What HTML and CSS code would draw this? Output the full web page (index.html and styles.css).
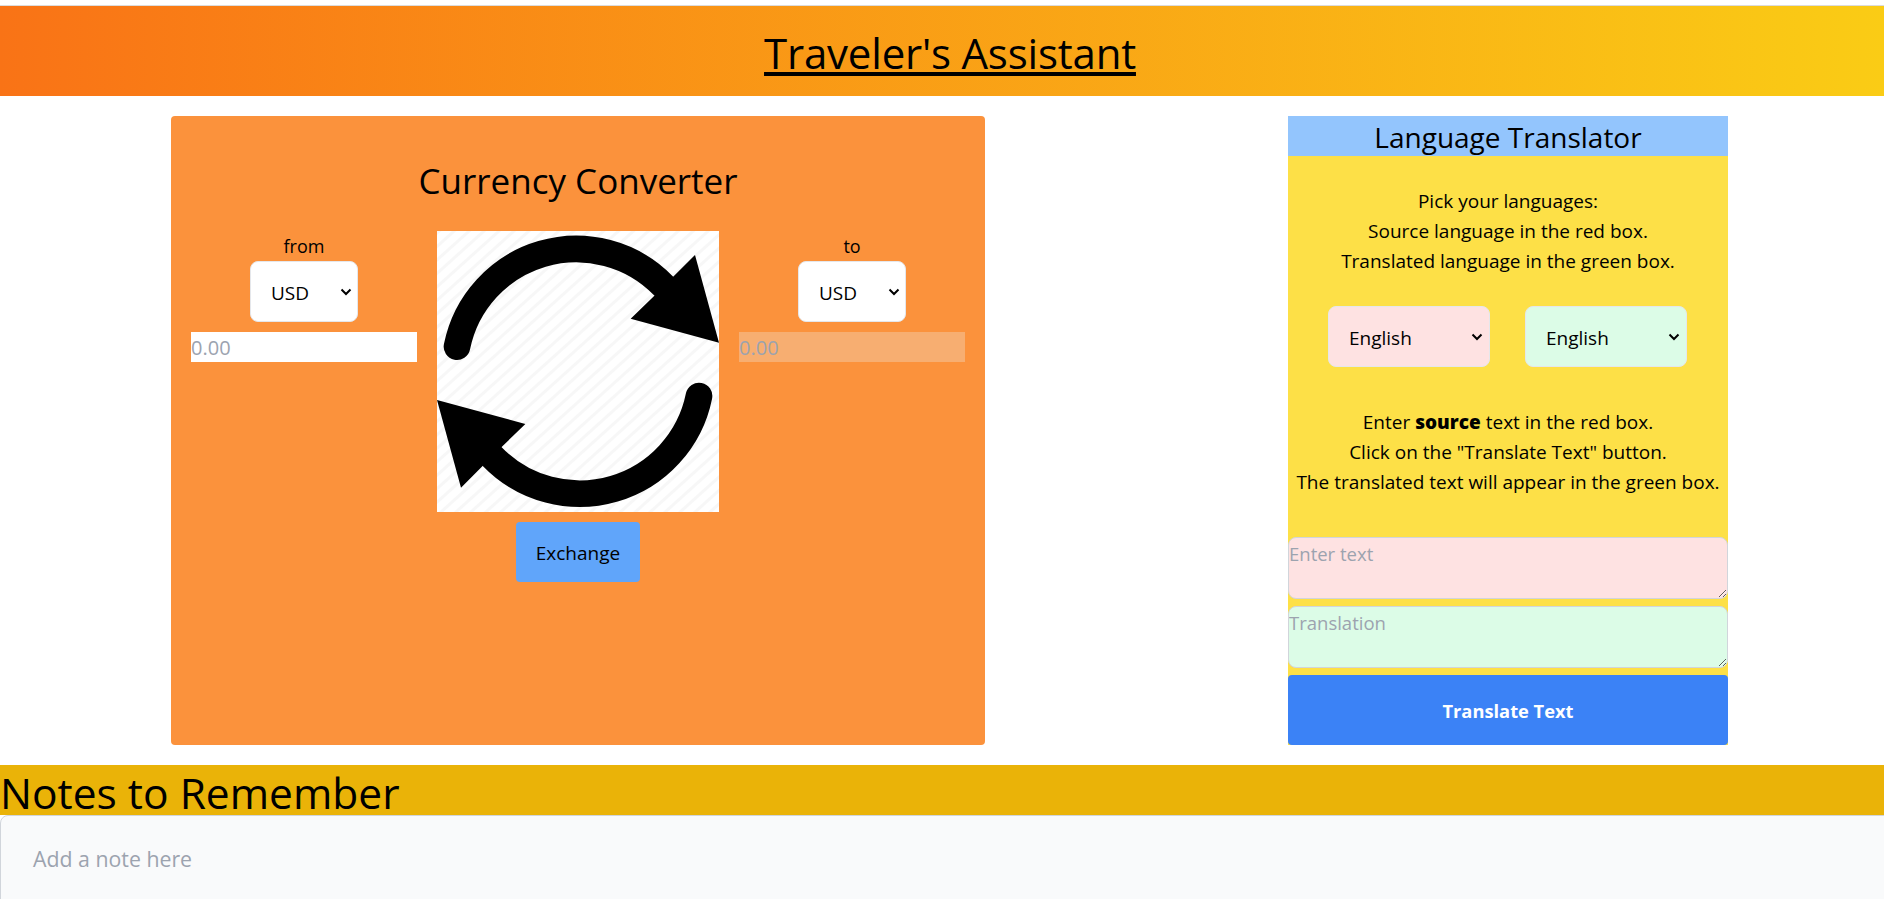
FILE: index.html
```html
<!DOCTYPE html>
<html lang="en">
<head>
  <meta charset="UTF-8" />
  <meta name="viewport" content="width=device-width,initial-scale=1" />
  <title>Traveler's Assistant</title>
  <link rel="stylesheet" href="styles.css">
</head>
<body>
  <header class="site-header">
    <h1>Traveler's Assistant</h1>
  </header>

  <main class="tools">
    <section class="converter">
      <h2>Currency Converter</h2>
      <div class="converter-row">
        <div class="currency">
          <label for="fromCur">from</label>
          <select id="fromCur"><option>USD</option></select>
          <input type="text" placeholder="0.00" />
        </div>
        <div class="exchange">
          <svg class="exchange-icon" viewBox="0 0 846 843" role="img" aria-label="exchange">
            <defs>
              <pattern id="hatch" width="30" height="30" patternUnits="userSpaceOnUse" patternTransform="rotate(-42)">
                <rect width="30" height="30" fill="#ffffff" />
                <rect width="30" height="9" fill="#f7f7f7" />
              </pattern>
            </defs>
            <rect width="846" height="843" fill="url(#hatch)" />
            <g id="arrow">
              <path d="M60 347A365 365 0 0 1 680 165" fill="none" stroke="#000" stroke-width="80" stroke-linecap="round" />
              <polygon points="774,72 846,335 581,263 649,197 707,139" />
            </g>
            <use href="#arrow" transform="rotate(180 423 421)" />
          </svg>
          <button class="exchange-btn" type="button">Exchange</button>
        </div>
        <div class="currency">
          <label for="toCur">to</label>
          <select id="toCur"><option>USD</option></select>
          <input class="result" type="text" placeholder="0.00" disabled />
        </div>
      </div>
    </section>

    <section class="translator">
      <h2>Language Translator</h2>
      <p class="help help-top">Pick your languages:<br>Source language in the red box.<br>Translated language in the green box.</p>
      <div class="lang-row">
        <select class="red"><option>English</option></select>
        <select class="green"><option>English</option></select>
      </div>
      <p class="help help-mid">Enter <b>source</b> text in the red box.<br>Click on the "Translate Text" button.<br>The translated text will appear in the green box.</p>
      <textarea class="red" placeholder="Enter text"></textarea>
      <textarea class="green" placeholder="Translation"></textarea>
      <button class="translate-btn" type="button">Translate Text</button>
    </section>
  </main>

  <section class="notes">
    <h2>Notes to Remember</h2>
    <textarea placeholder="Add a note here"></textarea>
  </section>
</body>
</html>
```

FILE: styles.css
```css
body {
  font-family: "Open Sans", "Noto Sans", sans-serif;
  margin: 0;
  padding-top: 5px;
  background: white;
  color: black;
  height: 100vh;
  box-sizing: border-box;
  overflow: hidden;
}
h1, h2, p {
  margin: 0;
  font-weight: normal;
}
select, input, textarea, button {
  font-family: inherit;
  box-sizing: border-box;
  color: black;
}
select {
  appearance: none;
  background-image: url("data:image/svg+xml,%3Csvg xmlns='http://www.w3.org/2000/svg' width='12' height='8' viewBox='0 0 12 8'%3E%3Cpath d='M1.5 1.5 6 6l4.5-4.5' fill='none' stroke='%23000' stroke-width='2'/%3E%3C/svg%3E");
  background-repeat: no-repeat;
  background-position: right 5px center;
}
input::placeholder, textarea::placeholder {
  color: #9ca3af;
  opacity: 1;
}

.site-header {
  height: 91px;
  box-sizing: border-box;
  display: flex;
  align-items: center;
  justify-content: center;
  padding: 3px 0 0 16px;
  border-top: 1px solid #dcdcdc;
  background: linear-gradient(to right, #f97316, #facc15);
}
.site-header h1 {
  font-size: 42px;
  letter-spacing: -0.2px;
  text-decoration: underline;
}

.tools {
  display: flex;
  justify-content: space-between;
  padding: 20px 156px 20px 171px;
}

.converter {
  width: 814px;
  height: 629px;
  box-sizing: border-box;
  background: #fb923c;
  border-radius: 4px;
  padding: 38px 20px 0;
}
.converter h2 {
  font-size: 35px;
  line-height: 54px;
  text-align: center;
}
.converter-row {
  display: flex;
  justify-content: space-between;
  margin-top: 23px;
}
.currency {
  width: 226px;
  display: flex;
  flex-direction: column;
  align-items: center;
}
.currency label {
  font-size: 18px;
  line-height: 30px;
}
.currency select {
  width: 108px;
  height: 61px;
  padding: 2px 0 0 20px;
  font-size: 19px;
  background-color: white;
  border: 1px solid #e5e7eb;
  border-radius: 8px;
}
.currency input {
  width: 226px;
  height: 30px;
  margin-top: 10px;
  padding: 0;
  border: none;
  font-size: 20px;
  background: white;
}
.currency input.result {
  background: rgba(239, 239, 239, 0.3);
}
.exchange {
  width: 282px;
  display: flex;
  flex-direction: column;
  align-items: center;
}
.exchange-icon {
  display: block;
  width: 282px;
  height: 281px;
}
.exchange-btn {
  width: 124px;
  height: 60px;
  margin-top: 10px;
  padding-top: 2px;
  background: #60a5fa;
  border: none;
  border-radius: 4px;
  font-size: 19px;
}

.translator {
  width: 440px;
  height: 629px;
  display: flex;
  flex-direction: column;
  background: #fde047;
}
.translator h2 {
  height: 40px;
  font-size: 28px;
  line-height: 42px;
  text-align: center;
  background: #93c5fd;
}
.help {
  font-size: 19px;
  line-height: 30px;
  text-align: center;
}
.help b {
  font-weight: 900;
}
.help-top {
  margin-top: 30px;
}
.lang-row {
  display: flex;
  gap: 35px;
  margin: 30px 0 40px;
  padding-left: 40px;
}
.lang-row select {
  width: 162px;
  height: 61px;
  padding: 2px 0 0 20px;
  font-size: 19px;
  border: 1px solid #e5e7eb;
  border-radius: 8px;
  background-position: right 6px center;
}
.translator textarea {
  display: block;
  width: 100%;
  height: 62px;
  padding: 3px 0 0;
  margin-bottom: 7px;
  font-size: 18.5px;
  border: 1px solid #d1d5db;
  border-radius: 8px;
}
.help-mid {
  margin-bottom: 40px;
}
.red {
  background-color: #fee2e2;
}
.green {
  background-color: #dcfce7;
}
.translate-btn {
  height: 70px;
  margin-top: auto;
  background: #3b82f6;
  color: white;
  border: none;
  border-radius: 4px;
  font-size: 18.3px;
  font-weight: bold;
}

.notes h2 {
  height: 50px;
  font-size: 42.5px;
  line-height: 56px;
  background: #eab308;
}
.notes textarea {
  display: block;
  width: calc(100% + 20px);
  height: 120px;
  padding: 28px 32px;
  font-size: 21.3px;
  background: #f9fafb;
  border: 1px solid #d1d5db;
  border-radius: 8px;
  resize: none;
}
```
